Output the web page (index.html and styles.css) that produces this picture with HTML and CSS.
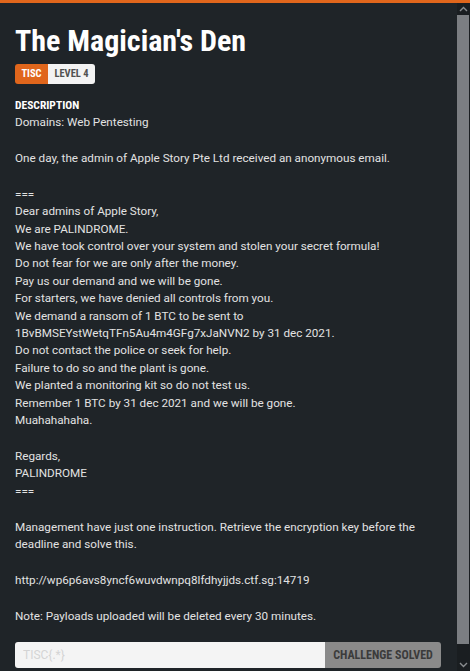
FILE: index.html
```html
<!DOCTYPE html>
<html>
<head>
<meta charset="utf-8">
<link rel="stylesheet" href="styles.css">
</head>
<body>
<div class="topbar"></div>
<div class="frame">
  <main class="content">
    <h1 class="title">The Magician's Den</h1>
    <div class="badges"><span class="badge badge-cat">TISC</span><span class="badge badge-level">LEVEL 4</span></div>
    <h2 class="label">DESCRIPTION</h2>
    <div class="desc">
      <p>Domains: Web Pentesting</p>
      <p>One day, the admin of Apple Story Pte Ltd received an anonymous email.</p>
      <p>===<br>Dear admins of Apple Story,<br>We are PALINDROME.<br>We have took control over your system and stolen your secret formula!<br>Do not fear for we are only after the money.<br>Pay us our demand and we will be gone.<br>For starters, we have denied all controls from you.<br>We demand a ransom of 1 BTC to be sent to<br>1BvBMSEYstWetqTFn5Au4m4GFg7xJaNVN2 by 31 dec 2021.<br>Do not contact the police or seek for help.<br>Failure to do so and the plant is gone.<br>We planted a monitoring kit so do not test us.<br>Remember 1 BTC by 31 dec 2021 and we will be gone.<br>Muahahahaha.</p>
      <p>Regards,<br>PALINDROME<br>===</p>
      <p>Management have just one instruction. Retrieve the encryption key before the deadline and solve this.</p>
      <p>http://wp6p6avs8yncf6wuvdwnpq8lfdhyjjds.ctf.sg:14719</p>
      <p class="last">Note: Payloads uploaded will be deleted every 30 minutes.</p>
    </div>
    <form class="flag-form">
      <input class="flag-input" type="text" placeholder="TISC{.*}">
      <button class="flag-btn" type="button">CHALLENGE SOLVED</button>
    </form>
  </main>
  <div class="scrollbar">
    <div class="sb-btn"><svg width="9" height="6" viewBox="0 0 9 6"><path d="M1 5 L4.5 1.5 L8 5" fill="none" stroke="#8a8d90" stroke-width="1.4"/></svg></div>
    <div class="sb-thumb"></div>
    <div class="sb-btn sb-btn-down"><svg width="9" height="6" viewBox="0 0 9 6"><path d="M1 1 L4.5 4.5 L8 1" fill="none" stroke="#8a8d90" stroke-width="1.4"/></svg></div>
  </div>
</div>
</body>
</html>
```
FILE: styles.css
```css
* { box-sizing: border-box; }
html, body { margin: 0; padding: 0; }
body {
  background: #1f2428;
  width: 470px;
  height: 671px;
  overflow: hidden;
  font-family: Roboto, "Liberation Sans", sans-serif;
  color: #e2e2e2;
  display: flex;
  flex-direction: column;
}
.topbar {
  height: 3px;
  background: #e0661c;
  flex: none;
}
.frame {
  flex: 1;
  display: flex;
  min-height: 0;
}
.content {
  flex: 1;
  padding: 20px 16px 0 15px;
  overflow: hidden;
}
.title, .badge, .label, .flag-btn {
  font-family: "Roboto Condensed", "DejaVu Sans", sans-serif;
  font-stretch: condensed;
  font-weight: bold;
}
.title {
  margin: 0;
  font-size: 30px;
  line-height: 35px;
  color: #ffffff;
}
.badges {
  display: flex;
  margin-top: 6px;
}
.badge {
  font-size: 10.5px;
  height: 20px;
  line-height: 20px;
  text-align: center;
}
.badge-cat {
  background: #e0661c;
  color: #ffffff;
  border-radius: 3px 0 0 3px;
  width: 33px;
}
.badge-level {
  background: #f3f3f3;
  color: #505050;
  border-radius: 0 3px 3px 0;
  width: 47px;
}
.label {
  margin: 13px 0 0;
  font-size: 11.5px;
  line-height: 17px;
  color: #ffffff;
}
.desc {
  font-size: 11.7px;
  line-height: 17.4px;
}
.desc p { margin: 0 0 18.5px; }
.desc p.last { margin-bottom: 17px; }
.flag-form {
  display: flex;
  height: 26px;
}
.flag-input {
  flex: 1;
  border: none;
  border-radius: 3px 0 0 3px;
  background: #f4f4f4;
  padding: 0 8px;
  font-family: Roboto, sans-serif;
  font-size: 12px;
  outline: none;
}
.flag-input::placeholder { color: #d4d4d4; }
.flag-btn {
  width: 116px;
  border: none;
  border-radius: 0 3px 3px 0;
  background: #8a8a8a;
  color: #3b3b3b;
  font-size: 12px;
  white-space: nowrap;
  padding: 0;
}
.scrollbar {
  width: 13px;
  flex: none;
  background: #1a1e21;
  display: flex;
  flex-direction: column;
  padding-right: 1px;
}
.sb-btn {
  height: 12px;
  display: flex;
  align-items: center;
  justify-content: center;
  flex: none;
}
.sb-btn-down { height: 17px; align-items: flex-end; padding-bottom: 3px; }
.sb-thumb {
  flex: 1;
  background: #7b7e82;
  margin: 0 0 10px 0;
}
```
